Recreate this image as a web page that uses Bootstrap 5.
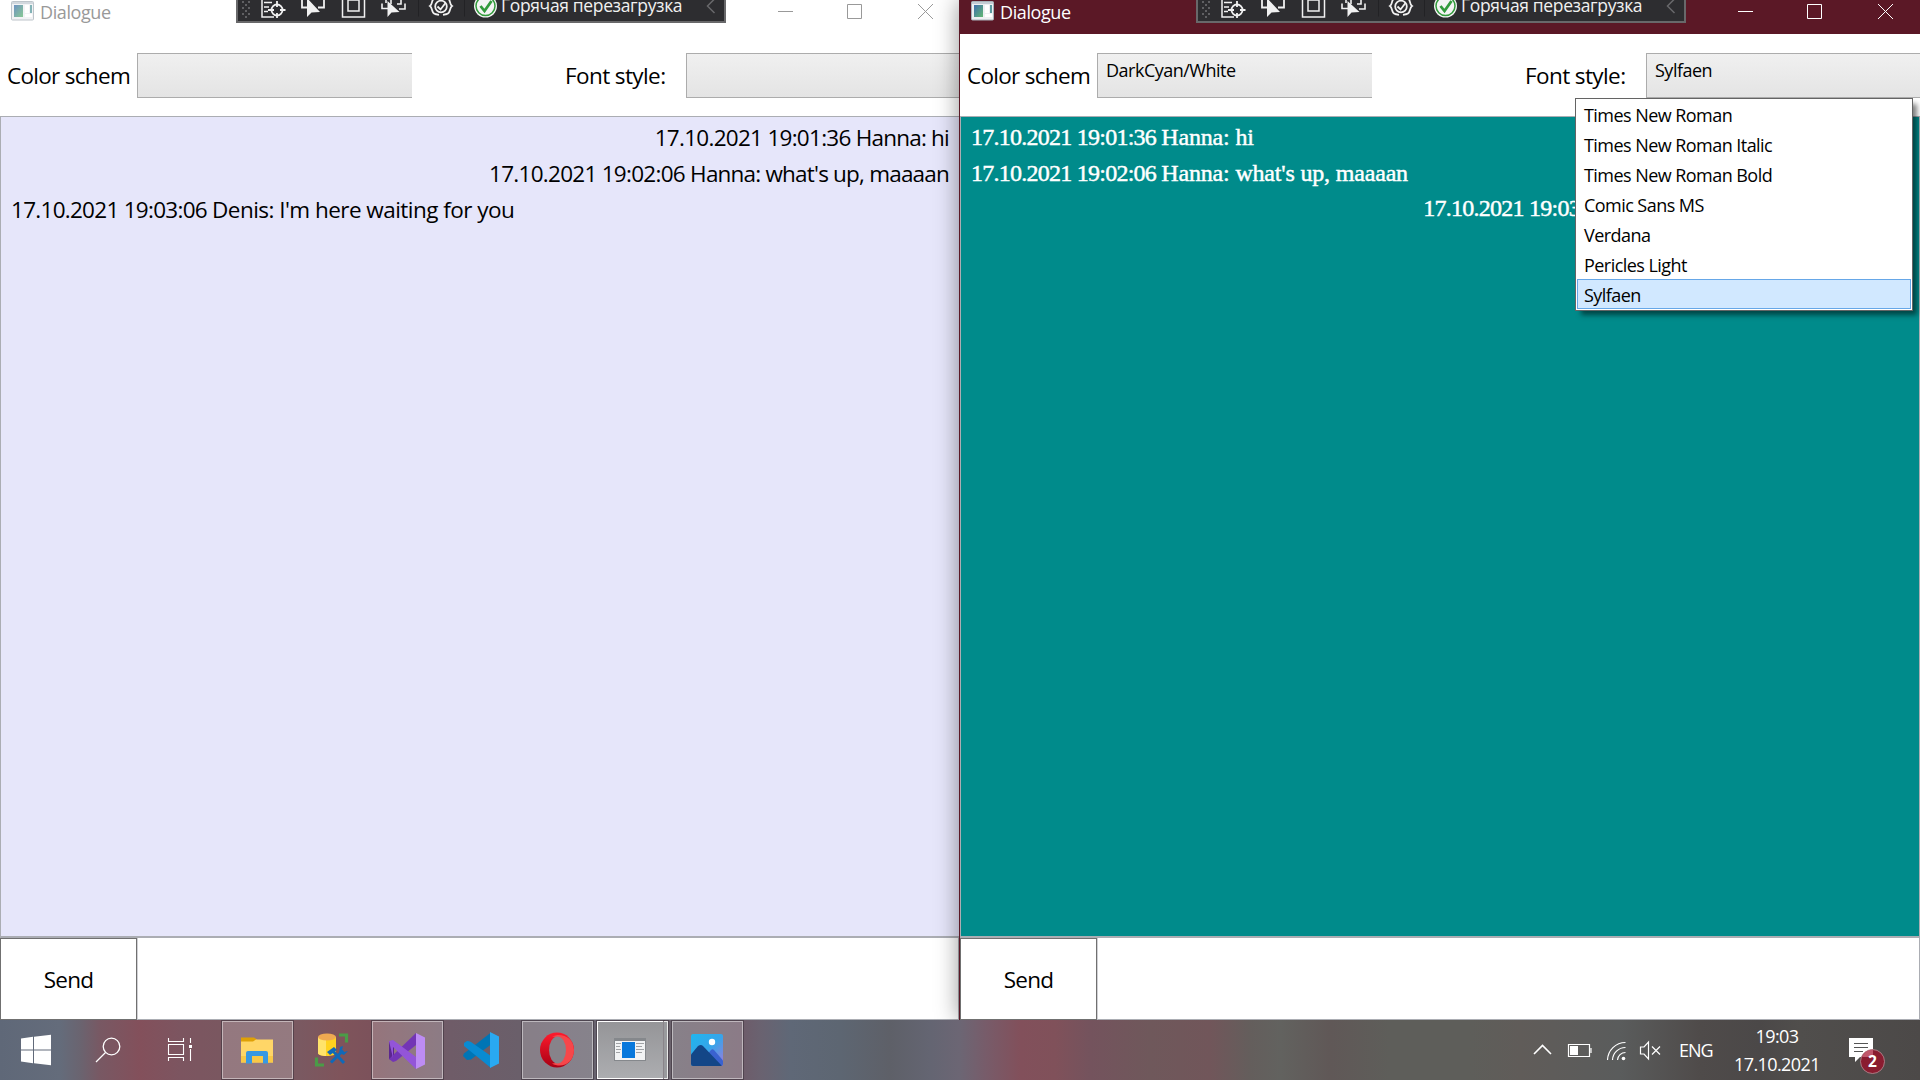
<!DOCTYPE html>
<html lang="en">
<head>
<meta charset="utf-8">
<title>Dialogue</title>
<link href="https://cdn.jsdelivr.net/npm/bootstrap@5.3.0/dist/css/bootstrap.min.css" rel="stylesheet">
<style>
body{width:1920px;height:1080px;overflow:hidden;font-family:"Open Sans","Noto Sans",sans-serif;font-size:22.5px;letter-spacing:-.8px;line-height:30px;color:#000;background:#fff}
svg{display:block;flex:none}
.win{height:1020px;background:#fff}
.win-left{width:959px}
.win-right{width:961px;border-left:1px solid #5b1826;box-shadow:0 0 22px rgba(0,0,0,.42);z-index:2}
.titlebar{height:34px;padding-left:11px;font-size:18px;letter-spacing:-.4px;line-height:24px;color:#999}
.win-right .titlebar{background:#5b1826;color:#fff}
.titlebar .app-icon{margin-top:1px}
.titlebar .caption{margin-left:6px;width:738px}
.vs-bar{left:236px;top:0;width:490px;height:23px;background:#2d2d30;border:2px solid #68686a;border-top:0;overflow:hidden}
.vs-bar svg{margin-left:-2px}
.vs-label{left:263px;top:-10px;color:#f1f1f1;font-size:17.5px;letter-spacing:-.35px;line-height:30px}
.options{height:82px}
.options .name-a{width:130px;margin-left:7px;padding-top:2px;letter-spacing:-.7px}
.options .name-b{width:121px;margin-left:153px;padding-top:2px;letter-spacing:-.6px}
.combo{height:45px;width:275px;flex:none;border:1px solid #acacac;background:linear-gradient(#f0f0f0,#e4e4e4);padding:1px 8px;font-size:18px;letter-spacing:-.5px}
.combo-cut{border-right:0}
.chat{height:822px;border:1px solid #abadb3;border-bottom-width:2px;padding:3px 10px 0 10px}
.win-left .chat{background:#e6e6fa;border-right:0;line-height:36px}
.win-left .stamp{letter-spacing:-.72px}
.win-left .long{letter-spacing:-.54px}
.win-right .chat{background:#008b8b;color:#fff;font-family:"Liberation Serif",serif;font-size:24px;letter-spacing:-.18px;line-height:35.5px;-webkit-text-stroke:.45px #fff}
.win-right .stamp{letter-spacing:-.75px}
.compose{height:82px}
.send{width:137px;border:1px solid #707070;background:#fff;padding:1px 0 0;color:#000;font-size:22.5px;letter-spacing:-.7px;border-radius:0;line-height:80px}
.entry{border:1px solid #abadb3;border-left-color:#d0d0d4;border-top:0}
.font-menu{left:615px;top:98px;width:338px;height:213px;border:1px solid #646464;background:#fff;box-shadow:5px 5px 5px -1px rgba(0,0,0,.5);padding:0 1px;font-size:18px;letter-spacing:-.55px;z-index:5}
.font-menu li{height:30px;border:1px solid transparent;padding-left:6px;white-space:nowrap}
.font-menu li.picked{background:#d1e8ff;border-color:#66a7e8}
.taskbar{height:60px;position:relative;z-index:4;color:#fff;font-size:18px;letter-spacing:-.6px;background:linear-gradient(90deg,#5f6878 0,#646c7b 60px,#6a6470 80px,#785863 100px,#83505b 140px,#7c5560 180px,#7a5760 220px,#7a5961 300px,#7f545b 340px,#7c525b 370px,#6f5c68 450px,#6a5f6a 520px,#686470 600px,#6a626c 670px,#6e5b69 740px,#6a6270 760px,#5f6877 790px,#5d6672 840px,#5e6068 890px,#646572 930px,#6c6674 960px,#775c6a 985px,#82505b 1020px,#80515a 1055px,#74535d 1090px,#6f585b 1150px,#71565a 1210px,#645e5c 1250px,#62625f 1280px,#605857 1330px,#5e5e5a 1390px,#5e5e5a 1470px,#605c59 1520px,#5a5c5c 1620px,#4f4b4a 1700px,#4b4848 1760px,#504e4c 1800px,#4c4948 1920px)}
.task{width:71px;height:58px;margin:1px 4px 0 0;border:1px solid rgba(255,255,255,.45);background:rgba(255,255,255,.2);outline:1px solid rgba(60,50,60,.6)}
.task-live{width:67px;border-color:#fff;background:linear-gradient(#959598,#acadb0);margin-right:0}
.task-more{width:4px;margin:1px 4px 0 0;height:58px;border:1px solid #e8e8e8;border-left:0;background:#999a9d;outline:1px solid rgba(60,50,60,.6)}
.tray{margin-left:auto;width:420px}
.lang{width:52px;margin-left:4px;padding-top:15px;letter-spacing:-1px}
.clock{width:92px;margin-right:8px;line-height:28px;padding-top:2px}
</style>
<script src="https://cdn.jsdelivr.net/npm/bootstrap@5.3.0/dist/js/bootstrap.bundle.min.js"></script>
</head>
<body>
<svg width="0" height="0" class="position-absolute">
<defs>
<linearGradient id="scr" x2="1" y2="1"><stop stop-color="#3f6fae"/><stop offset="1" stop-color="#62b872"/></linearGradient>
<symbol id="app" viewBox="0 0 23 20"><rect x=".5" y=".5" width="22" height="18.5" rx="1" fill="#eef0f2" stroke="#a9b2ba"/><rect x="1" y="1" width="21" height="2" fill="#c4ccd4"/><rect x="3" y="4" width="9" height="12" fill="url(#scr)"/><rect x="14" y="4" width="4" height="8" fill="#fff"/><rect x="19" y="4" width="2" height="8" fill="#5a9aa0"/><rect x="14" y="13" width="7" height="3" fill="#fff"/></symbol>
<symbol id="vs" viewBox="0 0 491 23">
<g fill="#606063"><path d="M6 1h2v2H6zM12 1h2v2h-2zM9 4h2v2H9zM6 7h2v2H6zM12 7h2v2h-2zM9 10h2v2H9zM6 13h2v2H6zM12 13h2v2h-2zM9 16h2v2H9z"/></g>
<g fill="none" stroke="#f1f1f1" stroke-width="1.5"><path d="M26 0v17h12M28 2.500h8M28 7h5M28 11.500h4"/><circle cx="41" cy="10" r="5.500" stroke-width="1.800"/><path d="M41 1v6M41 13v5M32 10h6M44 10h5.500" stroke-width="1.800"/>
<path d="M66 0v7.500h5M82 7.500h6V0" stroke-width="1.800"/>
<rect x="106.500" y="-4" width="22" height="21"/><rect x="112" y="0" width="11" height="11"/>
<path d="M150 0v3M146 3.500v5h7M155 0v4M161 4h4V0M163 9h6V3.500" stroke-width="1.600"/>
<circle cx="205" cy="6.500" r="5.800" stroke-width="1.800"/><path d="M201.500 6.500l3 3 5-6.500" stroke-width="1.800"/><path d="M199-2c-4 1-2 6-5 8 3 2 1 7 5 8l4 .8M211-2c4 1 2 6 5 8-3 2-1 7-5 8l-4 .8" stroke-width="1.800"/></g>
<path d="M71-2v19l4.500-4.500 8.500-.5zM151.500 1v16l4-4.500 8-.5z" fill="#f1f1f1"/>
<path d="M182.500 0v16.500M228.500 0v16.500" stroke="#222225"/>
<circle cx="249.500" cy="6" r="11.500" fill="#f4f4f4"/><circle cx="249.500" cy="6" r="9.500" fill="none" stroke="#329a3c" stroke-width="1.500"/><path d="M244.500 6l4 5 7-10" fill="none" stroke="#329a3c" stroke-width="2.800"/>
<path d="M478.500-1l-7 7 7 7" fill="none" stroke="#68686b" stroke-width="1.500"/>
</symbol>
<symbol id="controls" viewBox="0 0 156 20"><path d="M0 11.500h15M69.500 4.500h14v14h-14zM140 4l15 15M155 4l-15 15" fill="none" stroke="currentColor"/></symbol>
</defs>
</svg>

<main class="d-flex">
<section class="win win-left overflow-hidden position-relative">
 <header class="titlebar d-flex align-items-start position-relative"><svg class="app-icon opacity-75" width="23" height="20"><use href="#app"/></svg><span class="caption">Dialogue</span><svg width="156" height="20"><use href="#controls"/></svg>
  <div class="vs-bar position-absolute"><svg width="491" height="23"><use href="#vs"/></svg><span class="vs-label position-absolute text-nowrap">Горячая перезагрузка</span></div></header>
 <div class="options d-flex align-items-center text-nowrap overflow-hidden"><span class="name-a flex-shrink-0">Color schem</span><div class="combo combo-cut"></div><span class="name-b flex-shrink-0">Font style:</span><div class="combo"></div></div>
 <div class="chat"><div class="text-end"><span class="stamp">17.10.2021 19:01:36 </span>Hanna: hi</div><div class="text-end"><span class="stamp">17.10.2021 19:02:06 </span>Hanna: what's up, maaaan</div><div class="long"><span class="stamp">17.10.2021 19:03:06 </span>Denis: I'm here waiting for you</div></div>
 <div class="compose d-flex"><button class="send">Send</button><div class="entry flex-grow-1"></div></div>
</section>
<section class="win win-right position-relative">
 <header class="titlebar d-flex align-items-start position-relative"><svg class="app-icon" width="23" height="20"><use href="#app"/></svg><span class="caption">Dialogue</span><svg width="156" height="20"><use href="#controls"/></svg>
  <div class="vs-bar position-absolute"><svg width="491" height="23"><use href="#vs"/></svg><span class="vs-label position-absolute text-nowrap">Горячая перезагрузка</span></div></header>
 <div class="options d-flex align-items-center text-nowrap overflow-hidden"><span class="name-a flex-shrink-0">Color schem</span><div class="combo combo-cut">DarkCyan/White</div><span class="name-b flex-shrink-0">Font style:</span><div class="combo">Sylfaen</div></div>
 <div class="chat overflow-hidden"><div><span class="stamp">17.10.2021 19:01:36 </span>Hanna: hi</div><div><span class="stamp">17.10.2021 19:02:06 </span>Hanna: what's up, maaaan</div><div class="text-end"><span class="stamp">17.10.2021 19:03:06 </span>Denis: I'm here waiting for you</div></div>
 <div class="compose d-flex"><button class="send">Send</button><div class="entry flex-grow-1"></div></div>
 <ul class="font-menu list-unstyled position-absolute mb-0"><li>Times New Roman</li><li>Times New Roman Italic</li><li>Times New Roman Bold</li><li>Comic Sans MS</li><li>Verdana</li><li>Pericles Light</li><li class="picked">Sylfaen</li></ul>
</section>
</main>

<footer class="taskbar d-flex">
 <svg width="72" height="60"><path d="M21 18.500l12-1.700V29.500H21zM34 16.700L51 14.800V29.500H34zM21 30.500h12v12.700l-12-1.700zM34 30.500h17V45.200l-17-2z" fill="#fff"/></svg>
 <svg width="75" height="60"><g fill="none" stroke="#fff" stroke-width="1.300"><circle cx="39.500" cy="26.500" r="8.300"/><path d="M33.500 32.500L24 42"/></g></svg>
 <svg width="75" height="60"><g fill="none" stroke="#fff" stroke-width="1.100"><path d="M21.500 18v3.500h15V18M21.500 24.500h15v10h-15zM21.500 41v-3.500h15V41M43.500 18v5M43.500 29v12"/></g><path d="M42 25h3v3h-3z" fill="#fff"/></svg>
 <div class="task"><svg width="69" height="56"><path d="M18 15.500h13l3 2-2 3H18z" fill="#dfa106"/><path d="M18 19.500h12l3-2h17v23H18z" fill="#ffd667"/><path d="M18 34h32v6.500H18z" fill="#f9c846"/><path d="M23 41.500V31q0-2 2-2h18q2 0 2 2v10.500h-5V34H29v7.500z" fill="#3898e2"/></svg></div>
 <svg width="75" height="60"><path d="M21 17v16c0 4 18 4 18 0V17z" fill="#ffd21f"/><path d="M21 17v16c0 2 4 3 8 3V17z" fill="#ffe36b"/><ellipse cx="30" cy="17" rx="9" ry="3.500" fill="#efa951"/><path d="M43 15h7v7M27 44.500h-7V37" fill="none" stroke="#4b9b47" stroke-width="3.200" display="none"/><path d="M42 15h7.500v7.500M27 45h-7.500v-7.500" fill="none" stroke="#4b9b47" stroke-width="3.200"/><path d="M34 42.500l12-12M35 30l12 13" stroke="#1069b8" stroke-width="3"/><path d="M30 32l7-5 3 3-7 5z" fill="#1069b8"/><path d="M43 27l-1 6 5 2 4-4-4 1-2-2 1-4z" fill="#1069b8"/></svg>
 <div class="task"><svg width="69" height="56"><path d="M16 19l5 2v18l-5-2z" fill="#5b268f"/><path d="M16 37l27-26v12L23 39l-3 1z" fill="#7335b5"/><path d="M16 19l4-1 23 17v12L20 25v11" fill="#9355d8"/><path d="M43 11l9 4.500v27L43 47z" fill="#bd8cf4"/></svg></div>
 <svg width="75" height="60"><path d="M16 36l4 4 4-.5 20-15V12.500L17 33.500z" fill="#0075b5"/><path d="M17 23l3-2q2 0 4 1l20 14v12L17 26z" fill="#098bd2"/><path d="M43 12l9 4.500v27L43 48z" fill="#29a9f2"/></svg>
 <div class="task"><svg width="69" height="56"><defs><linearGradient id="op" x2="0" y2="1"><stop stop-color="#ff1b2d"/><stop offset="1" stop-color="#a70014"/></linearGradient></defs><ellipse cx="34" cy="28" rx="17" ry="17.500" fill="url(#op)"/><path d="M29 14.500C38 10 51 15 51 28S39 47 29 41.500c14 0 14-27 0-27z" fill="#f6474a"/><ellipse cx="34.500" cy="28" rx="8.500" ry="13.500" fill="#87838a"/></svg></div>
 <div class="task task-live"><svg width="65" height="56"><path d="M16 16h32v23H16z" fill="#85888c"/><path d="M17 19h30v19H17z" fill="#f2f3f4"/><path d="M24 20h13v16H24z" fill="#0878dc"/><path d="M18 21.500h5M18 24.500h4M18 27.500h5M18 30.500h4M38 21.500h8M38 24.500h6M38 27.500h8M38 30.500h6" stroke="#a0a2a5"/></svg></div><div class="task-more"></div>
 <div class="task"><svg width="69" height="56"><defs><linearGradient id="sky" x2="1" y2="1"><stop stop-color="#20b6ed"/><stop offset=".5" stop-color="#35a5ea"/><stop offset="1" stop-color="#a078d8"/></linearGradient><clipPath id="round"><rect x="18" y="12" width="32" height="32" rx="2"/></clipPath></defs><g clip-path="url(#round)"><path d="M18 12h32v32H18z" fill="url(#sky)"/><path d="M30 38l8-10q1.500-1.500 3 0l12 14v3z" fill="#3a62cf"/><path d="M16 35l9-11q3-2 5 0l20 21H16z" fill="#134687"/></g><circle cx="39" cy="20" r="3.200" fill="#fff"/></svg></div>
 <div class="tray d-flex">
  <svg width="175" height="60"><g fill="none" stroke="#fff" stroke-width="1.200"><path d="M34 34l8.500-8.500L51 34" stroke-width="1.600"/><path d="M68.500 24.500h21v12h-21zM91 28v5"/><path d="M107.500 40a18 18 0 0 1 18-17.500M112.500 40a13 13 0 0 1 13-12.500M117.500 40a8 8 0 0 1 8-7.500"/><path d="M140.500 27h3.500l4.500-5v17l-4.500-5h-3.500zM152 26.500l8 8M160 26.500l-8 8"/></g><path d="M70 26h8v9h-8z" fill="#fff"/><circle cx="123.500" cy="38.500" r="1.800" fill="#fff"/></svg>
  <span class="lang">ENG</span>
  <div class="clock text-center">19:03<br>17.10.2021</div>
  <svg width="89" height="60"><path d="M18 18h24v19H29l-5 5v-5h-6z" fill="#fff"/><path d="M23 23.500h14M23 27.500h14M23 31.500h9" stroke="#555"/><circle cx="41.500" cy="41.500" r="12" fill="#8a1c30" stroke="#b78e96" stroke-width=".8"/><path d="M31 37a12 12 0 0 1 11-7.500v7.500z" fill="#c0576b"/><text x="37" y="47" fill="#fff" font-size="15.500" font-weight="700">2</text></svg>
 </div>
</footer>
</body>
</html>
